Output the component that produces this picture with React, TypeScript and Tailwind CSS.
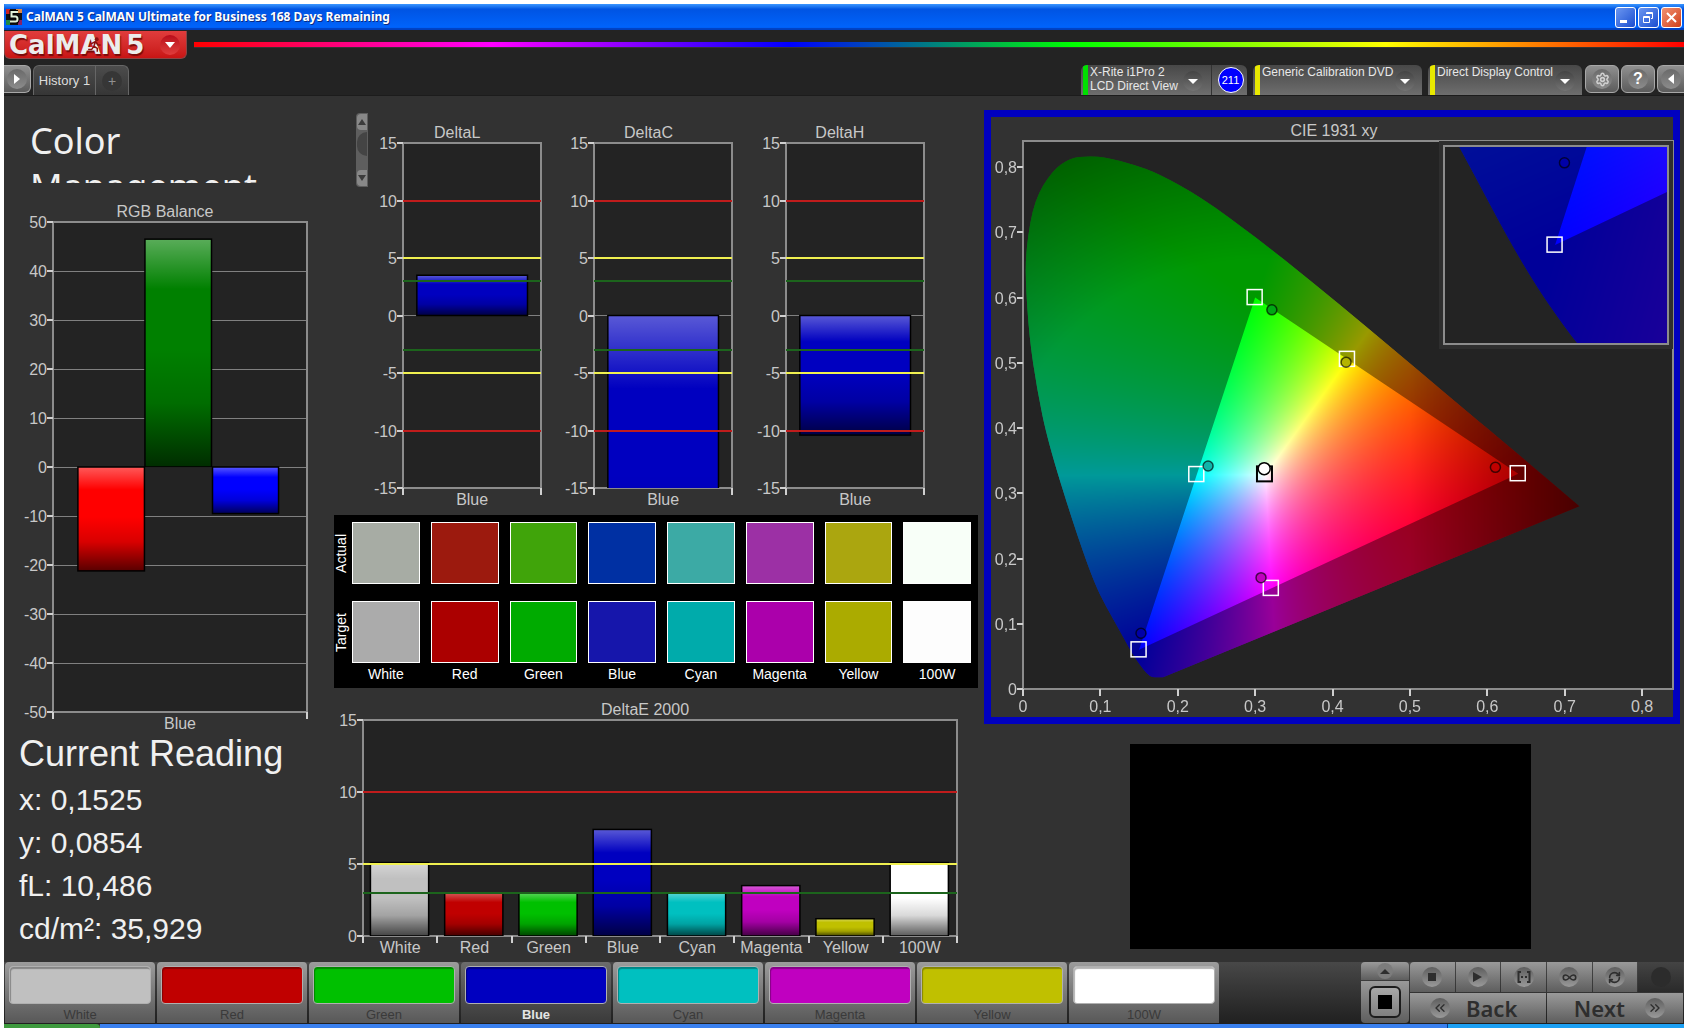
import React, { useEffect, useId, useRef } from 'react';
import {
  ChevronsLeft,
  ChevronsRight,
  Infinity as InfinityIcon,
  RefreshCw,
  Settings,
} from 'lucide-react';
import clsx from 'clsx';

interface Bar {
  x: number; // left edge, 0..1 of the plot width
  w: number;
  value: number;
  color: string;
}

interface Limit {
  value: number;
  color: string;
}

interface BarChartProps {
  title: string;
  min: number;
  max: number;
  step: number;
  bars: Bar[];
  categories: string[];
  limits?: Limit[];
  gridAt?: number[];
}

const patches = [
  { name: 'White', color: '#c0c0c0', actual: '#a7aca4', target: '#ababab', deltaE: 5.1 },
  { name: 'Red', color: '#c00000', actual: '#9c1a0e', target: '#ab0000', deltaE: 3 },
  { name: 'Green', color: '#00c000', actual: '#40a40a', target: '#00ab00', deltaE: 3 },
  { name: 'Blue', color: '#0000c0', actual: '#0030a3', target: '#1616ab', deltaE: 7.4 },
  { name: 'Cyan', color: '#00c0c0', actual: '#3caaa5', target: '#00abab', deltaE: 3 },
  { name: 'Magenta', color: '#c000c0', actual: '#9c30a5', target: '#ab00ab', deltaE: 3.5 },
  { name: 'Yellow', color: '#c0c000', actual: '#aba60f', target: '#abab00', deltaE: 1.2 },
  { name: '100W', color: '#ffffff', actual: '#f8fff8', target: '#fdfdfd', deltaE: 5.1 },
];

const deltaLimits: Limit[] = [
  { value: 10, color: '#c01c1c' },
  { value: 5, color: '#f0f050' },
  { value: 3, color: '#1c641c' },
  { value: -3, color: '#1c641c' },
  { value: -5, color: '#f0f050' },
  { value: -10, color: '#c01c1c' },
];

const deltas = [
  { title: 'DeltaL', value: 3.5 },
  { title: 'DeltaC', value: -29 },
  { title: 'DeltaH', value: -10.4 },
];

const readings = ['x: 0,1525', 'y: 0,0854', 'fL: 10,486', 'cd/m²: 35,929'];

const BarChart: React.FC<BarChartProps> = ({ title, min, max, step, bars, categories, limits = [], gridAt = [] }) => {
  const id = useId().replace(/[^a-zA-Z0-9]/g, '');
  const pct = (v: number) => ((max - v) / (max - min)) * 100;
  const ticks: number[] = [];
  for (let v = max; v >= min; v -= step) ticks.push(v);

  return (
    <div className="flex min-h-0 flex-1 flex-col">
      <h3 className="h-5 text-center text-base leading-5 text-[#c8c8c8]">{title}</h3>
      <div className="mr-[5px] mb-5 ml-[35px] min-h-0 flex-1">
        <svg width="100%" height="100%" className="block overflow-visible bg-[#232323]" role="img" aria-label={title}>
          <defs>
            <linearGradient id={`shade${id}`} x1="0" y1="0" x2="0" y2="1">
              <stop offset="0" stopColor="#fff" stopOpacity="0.35" />
              <stop offset="0.22" stopColor="#fff" stopOpacity="0" />
              <stop offset="0.48" stopColor="#000" stopOpacity="0" />
              <stop offset="0.72" stopColor="#000" stopOpacity="0.15" />
              <stop offset="1" stopColor="#000" stopOpacity="0.65" />
            </linearGradient>
          </defs>
          {gridAt.map((v) => (
            <line key={v} x1="0" x2="100%" y1={`${pct(v)}%`} y2={`${pct(v)}%`} stroke="#808080" shapeRendering="crispEdges" />
          ))}
          <rect width="100%" height="100%" fill="none" stroke="#8c8c8c" strokeWidth="2" shapeRendering="crispEdges" />
          {/* the inner svg cuts off bars that run past the scale */}
          <svg width="100%" height="100%">
            {bars.map((b, i) => {
              const box = {
                x: `${b.x * 100}%`,
                y: `${pct(Math.max(b.value, 0))}%`,
                width: `${b.w * 100}%`,
                height: `${(Math.abs(b.value) / (max - min)) * 100}%`,
              };
              return (
                <g key={i}>
                  <rect {...box} fill={b.color} />
                  <rect {...box} fill={`url(#shade${id})`} stroke="#000" strokeWidth="1.5" />
                </g>
              );
            })}
          </svg>
          {limits.map((l) => (
            <line
              key={l.value}
              x1="0"
              x2="100%"
              y1={`${pct(l.value)}%`}
              y2={`${pct(l.value)}%`}
              stroke={l.color}
              strokeWidth="2"
              shapeRendering="crispEdges"
            />
          ))}
          {ticks.map((v) => (
            <g key={v}>
              <line x1="-6" x2="0" y1={`${pct(v)}%`} y2={`${pct(v)}%`} stroke="#d0d0d0" strokeWidth="2" shapeRendering="crispEdges" />
              <text x="-6" y={`${pct(v)}%`} dy="6" textAnchor="end" fontSize="16" fill="#c8c8c8">
                {v}
              </text>
            </g>
          ))}
          {[...categories, ''].map((_, i) => (
            <svg key={i} x={`${(i / categories.length) * 100}%`} y="100%" overflow="visible">
              <line y2="7" stroke="#d0d0d0" strokeWidth="2" shapeRendering="crispEdges" />
            </svg>
          ))}
          {categories.map((c, i) => (
            <text key={c} x={`${((i + 0.5) / categories.length) * 100}%`} y="100%" dy="17" textAnchor="middle" fontSize="16" fill="#c8c8c8">
              {c}
            </text>
          ))}
        </svg>
      </div>
    </div>
  );
};

/* ---------- CIE 1931 diagram ---------- */

type Pt = [number, number];

interface Range {
  x0: number;
  x1: number;
  y0: number;
  y1: number;
}

const fullRange: Range = { x0: 0, x1: 0.84, y0: 0, y1: 0.84 };
const zoomRange: Range = { x0: 0.1207, x1: 0.1798, y0: 0.0297, y1: 0.0903 };

const locus: Pt[] = [
  [0.719, 0.28], [0.6915, 0.3083], [0.627, 0.3725], [0.5752, 0.4242], [0.5125, 0.4866],
  [0.4441, 0.5547], [0.3731, 0.6245], [0.3016, 0.6923], [0.2296, 0.7543], [0.175, 0.79],
  [0.143, 0.804], [0.108, 0.815], [0.085, 0.817], [0.061, 0.814], [0.038, 0.795],
  [0.0146, 0.749], [0.0045, 0.68], [0.003, 0.63], [0.0082, 0.5384], [0.018, 0.46],
  [0.032, 0.38], [0.064, 0.257], [0.091, 0.165], [0.108, 0.125], [0.1246, 0.0903],
  [0.1417, 0.0528], [0.1555, 0.0297], [0.164, 0.019], [0.17, 0.018], [0.181, 0.018],
];

const gamut: Pt[] = [[0.64, 0.33], [0.3, 0.6], [0.15, 0.06]];

const markers = [
  { target: [0.3, 0.6], actual: [0.3216, 0.5812], fill: '#00a814' },
  { target: [0.4193, 0.5053], actual: [0.4175, 0.501], fill: '#b4b400' },
  { target: [0.64, 0.33], actual: [0.6105, 0.3398], fill: '#c00000' },
  { target: [0.2246, 0.3287], actual: [0.2392, 0.3419], fill: '#10b4aa' },
  { target: [0.3209, 0.1542], actual: [0.3076, 0.1707], fill: '#c000c0' },
  { target: [0.15, 0.06], actual: [0.1525, 0.0854], fill: '#0000a8' },
  { target: [0.3127, 0.329], actual: [0.3117, 0.3378], fill: '#ffffff' },
];

const chromaColor = (x: number, y: number): number[] => {
  const yy = Math.max(y, 0.002);
  const X = x / yy;
  const Z = (1 - x - yy) / yy;
  const rgb = [
    3.2406 * X - 1.5372 - 0.4986 * Z,
    -0.9689 * X + 1.8758 + 0.0415 * Z,
    0.0557 * X - 0.204 + 1.057 * Z,
  ].map((c) => Math.max(c, 0));
  const top = Math.max(...rgb);
  // falls off towards the red and the green end
  let level = Math.min(1, 1 - (x - 0.5) * 2.4);
  if (y > 0.4) {
    level = Math.min(level, 1 - (Math.hypot(x - 0.31, y - 0.33) - 0.33) * 1.7);
  }
  return rgb.map((c) => (255 * level * c) / top);
};

const GamutCanvas: React.FC<{ range: Range }> = ({ range }) => {
  const ref = useRef<HTMLCanvasElement>(null);

  useEffect(() => {
    const canvas = ref.current;
    if (!canvas) return;

    const paint = () => {
      const w = canvas.clientWidth;
      const h = canvas.clientHeight;
      if (!w || !h) return;
      canvas.width = w;
      canvas.height = h;
      const ctx = canvas.getContext('2d')!;
      const px = ([x, y]: Pt): Pt => [
        ((x - range.x0) / (range.x1 - range.x0)) * w,
        ((range.y1 - y) / (range.y1 - range.y0)) * h,
      ];

      const layer = document.createElement('canvas');
      layer.width = w;
      layer.height = h;
      const lctx = layer.getContext('2d')!;
      const img = lctx.createImageData(w, h);
      for (let j = 0; j < h; j++) {
        const y = range.y1 - (j / h) * (range.y1 - range.y0);
        for (let i = 0; i < w; i++) {
          const x = range.x0 + (i / w) * (range.x1 - range.x0);
          const [r, g, b] = chromaColor(x, y);
          img.data.set([r, g, b, 255], (j * w + i) * 4);
        }
      }
      lctx.putImageData(img, 0, 0);

      // smooth outline through the middle of each pair of points
      const pts = locus.map(px);
      ctx.beginPath();
      ctx.moveTo(pts[0][0], pts[0][1]);
      for (let i = 1; i < pts.length - 1; i++) {
        const [ax, ay] = pts[i];
        const [bx, by] = pts[i + 1];
        ctx.quadraticCurveTo(ax, ay, (ax + bx) / 2, (ay + by) / 2);
      }
      const last = pts[pts.length - 1];
      ctx.lineTo(last[0], last[1]);
      ctx.closePath();
      ctx.clip();
      ctx.drawImage(layer, 0, 0);

      // darken everything outside the Rec.709 triangle
      ctx.beginPath();
      ctx.rect(0, 0, w, h);
      gamut.map(px).forEach(([x, y], i) => (i ? ctx.lineTo(x, y) : ctx.moveTo(x, y)));
      ctx.closePath();
      ctx.fillStyle = 'rgba(0,0,0,0.4)';
      ctx.fill('evenodd');
    };

    paint();
    window.addEventListener('resize', paint);
    return () => window.removeEventListener('resize', paint);
  }, [range]);

  return <canvas ref={ref} className="absolute inset-0 h-full w-full" />;
};

const Markers: React.FC<{ range: Range; items: typeof markers }> = ({ range, items }) => {
  const cx = (x: number) => `${((x - range.x0) / (range.x1 - range.x0)) * 100}%`;
  const cy = (y: number) => `${((range.y1 - y) / (range.y1 - range.y0)) * 100}%`;
  return (
    <>
      {items.map((m) => {
        const isWhite = m.fill === '#ffffff';
        return (
          <g key={m.fill}>
            <svg x={cx(m.target[0])} y={cy(m.target[1])} overflow="visible">
              <rect x="-8" y="-8" width="15" height="15" fill="none" stroke={isWhite ? '#000' : '#fff'} strokeWidth={isWhite ? 2 : 1.5} />
            </svg>
            <circle cx={cx(m.actual[0])} cy={cy(m.actual[1])} r={isWhite ? 6 : 5} fill={m.fill} stroke="#000" strokeOpacity={isWhite ? 1 : 0.65} strokeWidth="1.5" />
          </g>
        );
      })}
    </>
  );
};

const CieChart: React.FC = () => {
  const ticks = [0, 1, 2, 3, 4, 5, 6, 7, 8];
  const label = (t: number) => (t === 0 ? '0' : `0,${t}`);
  return (
    <section className="flex min-h-0 flex-[600] flex-col border-[7px] border-[#0000c0]">
      <h3 className="mt-1 h-5 pl-1 text-center text-base leading-5 text-[#c8c8c8]">CIE 1931 xy</h3>
      <div className="relative mb-7 ml-8 min-h-0 flex-1 bg-[#232323]">
        <GamutCanvas range={fullRange} />
        <svg width="100%" height="100%" className="absolute inset-0 block overflow-visible" role="img" aria-label="CIE 1931 xy">
          <rect width="100%" height="100%" fill="none" stroke="#8c8c8c" strokeWidth="2" shapeRendering="crispEdges" />
          {ticks.map((t) => {
            const y = `${100 - (t / 8.4) * 100}%`;
            const x = `${(t / 8.4) * 100}%`;
            return (
              <g key={t} fontSize="16" fill="#c8c8c8" stroke="none">
                <line x1="-6" x2="0" y1={y} y2={y} stroke="#d0d0d0" strokeWidth="2" shapeRendering="crispEdges" />
                <text x="-6" y={y} dy="6" textAnchor="end">
                  {label(t)}
                </text>
                <svg x={x} y="100%" overflow="visible">
                  <line y2="7" stroke="#d0d0d0" strokeWidth="2" shapeRendering="crispEdges" />
                </svg>
                <text x={x} y="100%" dy="23" textAnchor="middle">
                  {label(t)}
                </text>
              </g>
            );
          })}
          <Markers range={fullRange} items={markers} />
        </svg>
        {/* magnified view around the current patch */}
        <div className="absolute top-0 right-0 h-[38%] w-[36%] bg-[#2e2e2e] p-1">
          <div className="relative h-full w-full overflow-hidden border-2 border-[#8c8c8c] bg-[#232323]">
            <GamutCanvas range={zoomRange} />
            <svg width="100%" height="100%" className="absolute inset-0 block">
              <Markers range={zoomRange} items={markers.filter((m) => m.fill === '#0000a8')} />
            </svg>
          </div>
        </div>
      </div>
    </section>
  );
};

/* ---------- window chrome ---------- */

const Caret: React.FC<{ className?: string }> = ({ className }) => (
  <span className={clsx('flex h-5 w-5 shrink-0 items-center justify-center rounded-full bg-linear-to-b from-[#444] to-[#747474]', className)}>
    <svg width="10" height="5" viewBox="0 0 10 5">
      <path d="M0 0h10L5 5z" fill="#fff" />
    </svg>
  </span>
);

const TitleBar: React.FC = () => (
  <header className="flex h-[26px] items-center gap-1 bg-linear-to-b from-[#3a96ff] via-[#0054e3] via-20% to-[#0066ff] px-0.5 shadow-[inset_0_-2px_1px_#0040c0]">
    <svg width="16" height="16" viewBox="0 0 16 16">
      <rect width="16" height="16" fill="#111" />
      <path d="M0 0h4v5H0z" fill="#c22" />
      <path d="M10 0h6v4h-6z" fill="#d84" />
      <path d="M0 11h4v5H0z" fill="#284" />
      <path d="M12 11h4v5h-4z" fill="#826" />
      <path d="M12 3H5.500v4.500h4q2 0 2 2.500t-2 2.500H4" fill="none" stroke="#000" strokeWidth="4" />
      <path d="M12 3H5.500v4.500h4q2 0 2 2.500t-2 2.500H4" fill="none" stroke="#dff0d8" strokeWidth="2" />
    </svg>
    <h1 className="flex-1 font-['Noto_Sans'] text-xs leading-4 font-bold text-white [text-shadow:1px_1px_0_#0a2a80]">
      CalMAN 5 CalMAN Ultimate for Business 168 Days Remaining
    </h1>
    <div className="flex gap-0.5">
      <button aria-label="Minimize" className="h-[21px] w-[21px] rounded-[3px] border border-white bg-linear-to-br from-[#6c96f0] to-[#1a4cd0]">
        <svg width="19" height="19" viewBox="0 0 19 19">
          <path d="M4 12h7v3H4z" fill="#fff" />
        </svg>
      </button>
      <button aria-label="Restore" className="h-[21px] w-[21px] rounded-[3px] border border-white bg-linear-to-br from-[#6c96f0] to-[#1a4cd0]">
        <svg width="19" height="19" viewBox="0 0 19 19" fill="none" stroke="#fff">
          <path d="M4.500 8.500h6v6h-6zM4 9.500h7M7.500 6V4.500h6v6H12M7 5.500h7" />
        </svg>
      </button>
      <button aria-label="Close" className="h-[21px] w-[21px] rounded-[3px] border border-white bg-linear-to-br from-[#f09070] to-[#d03c10]">
        <svg width="19" height="19" viewBox="0 0 19 19">
          <path d="M5 5l9 9M14 5l-9 9" stroke="#fff" strokeWidth="2" />
        </svg>
      </button>
    </div>
  </header>
);

const DeviceMenu: React.FC<{ lines: string[]; bar: string; width: string; badge?: string }> = ({ lines, bar, width, badge }) => (
  <div className={clsx('flex h-[30px] overflow-hidden rounded-t-md bg-linear-to-b from-[#484848] to-[#6e6e6e]', width)}>
    <button aria-haspopup="menu" className="flex min-w-0 flex-1 items-start gap-0.5 pl-0.5 text-left">
      <span className={clsx('h-full w-[5px] shrink-0', bar)} />
      <span className="flex-1 text-xs leading-[14px] whitespace-nowrap text-[#e8e8e8]">
        {lines.map((l) => (
          <span key={l} className="block">
            {l}
          </span>
        ))}
      </span>
      <Caret className="mt-1.5 mr-2" />
    </button>
    {badge && (
      <span className="flex w-9 items-center justify-center border-l border-[#333] pl-0.5">
        <span className="flex h-[26px] w-[26px] items-center justify-center rounded-full border border-white bg-[#0000ff] text-[11px] text-white">
          {badge}
        </span>
      </span>
    )}
  </div>
);

const squareButton =
  'flex h-7 items-center justify-center border border-[#a8a8a8] bg-linear-to-b from-[#909090] to-[#5c5c5c]';
const knob =
  'flex h-5 w-5 items-center justify-center rounded-full bg-linear-to-b from-[#6a6a6a] to-[#8c8c8c]';

const Header: React.FC = () => (
  <div className="bg-[#232323]">
    <div className="flex h-[35px] items-start gap-[7px]">
      <button
        aria-label="CalMAN 5 menu"
        className="mt-px flex h-7 w-[183px] items-center justify-between overflow-hidden rounded-b-md border border-t-0 border-[#8a4444] bg-linear-to-b from-[#e03c3c] to-[#c81414] pr-1.5 pl-1"
      >
        <span className="relative flex gap-1 font-['DejaVu_Sans'] text-[26px] leading-7 font-bold text-[#ececec] [text-shadow:1px_2px_1px_#7a0a0a]">
          <span>CalMAN</span>
          <span>5</span>
          <svg className="absolute top-1.5 left-[78px]" width="16" height="16" viewBox="0 0 14 14">
            <circle cx="8.500" cy="2" r="1.700" fill="#8a1010" />
            <path d="M3.500 6l4-2 2 3h2.500M7.500 4L6 8l3 2v3M6 8l-2 3H1" fill="none" stroke="#8a1010" strokeWidth="1.300" />
          </svg>
        </span>
        <span className="flex h-5 w-5 items-center justify-center rounded-full bg-linear-to-b from-[#b80a1a] to-[#e03c3c]">
          <svg width="10" height="6" viewBox="0 0 10 6">
            <path d="M0 0h10L5 6z" fill="#fff" />
          </svg>
        </span>
      </button>
      <div className="mt-3 h-1.5 flex-1 border-b border-[#333] bg-[linear-gradient(90deg,#f00_0%,#f0f_20%,#00f_40%,#0f0_59%,#ff0_80%,#f00_100%)]" />
    </div>

    <div className="flex h-[31px] items-start justify-between border-b border-[#1c1c1c]">
      <nav className="flex items-start gap-0.5">
        <button aria-label="Expand" className={clsx(squareButton, 'w-[27px] rounded-r-md border-l-0')}>
          <span className={knob}>
            <svg width="6" height="10" viewBox="0 0 6 10">
              <path d="M0 0v10l6-5z" fill="#fff" />
            </svg>
          </span>
        </button>
        <div className="flex h-[30px] rounded-t-md border border-b-0 border-[#666] bg-linear-to-b from-[#4c4c4c] to-[#363636]">
          <button className="w-[62px] border-r border-[#666] text-center text-[13px] text-[#dcdcdc]">History 1</button>
          <button aria-label="Add history" className="flex w-8 items-center justify-center">
            <span className="flex h-5 w-5 items-center justify-center rounded-full bg-[#363636] text-sm text-[#909090]">+</span>
          </button>
        </div>
      </nav>

      <div className="flex items-start">
        <DeviceMenu lines={['X-Rite i1Pro 2', 'LCD Direct View']} bar="bg-[#00e000]" width="w-[166px]" badge="211" />
        <div className="w-1.5" />
        <DeviceMenu lines={['Generic Calibration DVD']} bar="bg-[#e8e800]" width="w-[169px]" />
        <div className="w-1.5" />
        <DeviceMenu lines={['Direct Display Control']} bar="bg-[#e8e800]" width="w-[154px]" />
        <div className="ml-[3px] flex gap-0.5">
          <button aria-label="Settings" className={clsx(squareButton, 'w-[34px] rounded-md')}>
            <span className={knob}>
              <Settings size={15} color="#d0d0d0" strokeWidth={2.5} />
            </span>
          </button>
          <button aria-label="Help" className={clsx(squareButton, 'w-[34px] rounded-md')}>
            <span className={clsx(knob, 'text-base font-bold text-white')}>?</span>
          </button>
          <button aria-label="Collapse" className={clsx(squareButton, 'w-[27px] rounded-l-md border-r-0')}>
            <span className={knob}>
              <svg width="6" height="10" viewBox="0 0 6 10">
                <path d="M6 0v10L0 5z" fill="#fff" />
              </svg>
            </span>
          </button>
        </div>
      </div>
    </div>
  </div>
);

const TextScroll: React.FC = () => (
  <div className="-mt-2.5 flex h-[74px] w-3 flex-col items-center justify-between rounded-l bg-[#5e5e5e] p-px">
    <button aria-label="Scroll up" className="flex h-4 w-full items-center justify-center rounded-l-sm bg-[#888]">
      <svg width="8" height="6" viewBox="0 0 8 6">
        <path d="M0 6h8L4 0z" fill="#3c3c3c" />
      </svg>
    </button>
    <span className="mb-3 h-6 w-2.5 rounded-l-full bg-[#444]" />
    <button aria-label="Scroll down" className="flex h-4 w-full items-center justify-center rounded-l-sm bg-[#888]">
      <svg width="8" height="6" viewBox="0 0 8 6">
        <path d="M0 0h8L4 6z" fill="#3c3c3c" />
      </svg>
    </button>
  </div>
);

const SwatchTable: React.FC = () => (
  <div className="mr-1.5 flex h-[173px] bg-black pt-[7px] pr-[7px] text-sm text-white">
    <div className="flex w-[18px] flex-col gap-[17px] pr-1">
      {['Actual', 'Target'].map((t) => (
        <span key={t} className="flex h-[62px] items-center justify-center leading-4 [writing-mode:sideways-lr]">
          {t}
        </span>
      ))}
    </div>
    <div className="grid flex-1 grid-cols-8 gap-[11px]">
      {patches.map((p) => (
        <div key={p.name} className="flex flex-col items-center">
          <div className="mb-[17px] h-[62px] w-full border border-white" style={{ backgroundColor: p.actual }} />
          <div className="h-[62px] w-full border border-white" style={{ backgroundColor: p.target }} />
          <span className="mt-0.5 leading-[18px]">{p.name}</span>
        </div>
      ))}
    </div>
  </div>
);

const Footer: React.FC = () => {
  const key = 'flex items-center justify-center bg-linear-to-b from-[#9a9a9a] to-[#5e5e5e]';
  const wide = 'flex items-center bg-linear-to-b from-[#9a9a9a] to-[#5e5e5e]';
  const dot = 'flex h-5 w-5 items-center justify-center rounded-full bg-linear-to-b from-[#5e5e5e] to-[#9a9a9a] text-[#2e2e2e]';
  return (
    <footer className="flex h-[62px] items-stretch justify-between bg-linear-to-b from-[#484848] to-[#202020] pb-px">
      <div className="flex gap-0.5 pl-px">
        {patches.map((p) => {
          const on = p.name === 'Blue';
          return (
            <button
              key={p.name}
              className={clsx(
                'flex w-[150px] flex-col items-center rounded-t px-1 pt-1 text-[13px] leading-4',
                on
                  ? 'bg-linear-to-b from-[#6c6c6c] to-[#3a3a3a] font-bold text-[#e4e4e4]'
                  : 'bg-linear-to-b from-[#9c9c9c] to-[#585858] text-[#3a3a3a]',
              )}
            >
              <span
                className="mb-[3px] h-[38px] w-full rounded border border-[#b0b0b0] shadow-[inset_1px_2px_1px_rgba(0,0,0,0.3)]"
                style={{ backgroundColor: p.color }}
              />
              {p.name}
            </button>
          );
        })}
      </div>

      <div className="flex gap-px pr-px">
        <div className="flex w-12 flex-col gap-px">
          <button aria-label="Show pattern list" className={clsx(key, 'h-[18px] rounded-t')}>
            <span className="flex h-4 w-4 items-center justify-center rounded-full bg-[#7c7c7c]">
              <svg width="10" height="5" viewBox="0 0 10 5">
                <path d="M0 5h10L5 0z" fill="#2e2e2e" />
              </svg>
            </span>
          </button>
          <button aria-label="Pattern window" className={clsx(key, 'flex-1 rounded-b')}>
            <span className="flex h-8 w-8 items-center justify-center rounded-md border-2 border-[#1c1c1c] bg-linear-to-b from-[#a8a8a8] to-[#808080]">
              <span className="h-3.5 w-3.5 bg-black" />
            </span>
          </button>
        </div>
        <div className="flex w-[273px] flex-col gap-px">
          <div className="grid flex-1 grid-cols-6 gap-px">
            <button aria-label="Stop" className={clsx(key, 'rounded-tl')}>
              <span className={dot}>
                <span className="h-2 w-2 bg-[#2e2e2e]" />
              </span>
            </button>
            <button aria-label="Read" className={key}>
              <span className={dot}>
                <svg width="9" height="10" viewBox="0 0 9 10">
                  <path d="M0 0v10l9-5z" fill="currentColor" />
                </svg>
              </span>
            </button>
            <button aria-label="Read series" className={key}>
              <span className={dot}>
                <svg width="14" height="12" viewBox="0 0 14 12" fill="none" stroke="currentColor" strokeWidth="2">
                  <path d="M4 1H1.500v10H4M10 1h2.500v10H10M4 6h2M8 6h2" />
                </svg>
              </span>
            </button>
            <button aria-label="Read continuous" className={key}>
              <span className={dot}>
                <InfinityIcon size={15} strokeWidth={2.5} />
              </span>
            </button>
            <button aria-label="Refresh" className={key}>
              <span className={dot}>
                <RefreshCw size={13} strokeWidth={3} />
              </span>
            </button>
            <span className="flex items-center justify-center bg-linear-to-b from-[#444] to-[#2a2a2a]">
              <span className="h-5 w-5 rounded-full bg-[#2c2c2c]" />
            </span>
          </div>
          <div className="grid flex-1 grid-cols-2 gap-px font-['Noto_Sans'] text-[22px] leading-7 font-semibold text-[#2e2e2e]">
            <button className={clsx(wide, 'gap-4 pl-5')}>
              <span className={dot}>
                <ChevronsLeft size={16} />
              </span>
              Back
            </button>
            <button className={clsx(wide, 'justify-end gap-5 pr-[18px]')}>
              Next
              <span className={dot}>
                <ChevronsRight size={16} />
              </span>
            </button>
          </div>
        </div>
      </div>
    </footer>
  );
};

const App: React.FC = () => {
  return (
    <div className="flex h-screen min-h-[900px] min-w-[1400px] flex-col border-x-4 border-t-4 border-white bg-[#323232] font-['Liberation_Sans',Arial,sans-serif]">
      <TitleBar />
      <Header />

      <main className="grid min-h-0 flex-1 grid-cols-[330fr_650fr_700fr]">
        {/* Left: RGB balance and the current reading */}
        <section className="flex min-h-0 flex-col pt-3.5">
          <h2 className="ml-[26px] h-[73px] overflow-hidden pt-2 font-['Noto_Sans'] text-[36px] leading-[46px] text-[#f0f0f0]">
            Color
            <br />
            Management
          </h2>
          <div className="mt-[19px] mr-[22px] ml-3.5 flex min-h-0 flex-1">
            <BarChart
              title="RGB Balance"
              min={-50}
              max={50}
              step={10}
              gridAt={[40, 30, 20, 10, 0, -10, -20, -30, -40]}
              categories={['Blue']}
              bars={[
                { x: 0.098, w: 0.262, value: -21.2, color: '#ff0000' },
                { x: 0.362, w: 0.262, value: 46.5, color: '#008000' },
                { x: 0.628, w: 0.26, value: -9.5, color: '#0000ff' },
              ]}
            />
          </div>
          <div className="pb-3 pl-[15px] text-[#f0f0f0]">
            <h2 className="mb-0.5 text-[36px] leading-[44px]">Current Reading</h2>
            {readings.map((r) => (
              <p key={r} className="text-[30px] leading-[43px]">
                {r}
              </p>
            ))}
          </div>
        </section>

        {/* Middle: deltas, patch comparison, DeltaE */}
        <section className="flex min-h-0 flex-col pt-[27px]">
          <div className="flex min-h-0 flex-[385] pr-[55px] pl-[22px]">
            <TextScroll />
            <div className="grid min-h-0 flex-1 grid-cols-3 gap-[13px]">
              {deltas.map((d) => (
                <div key={d.title} className="flex min-h-0">
                  <BarChart
                    title={d.title}
                    min={-15}
                    max={15}
                    step={5}
                    gridAt={[0]}
                    limits={deltaLimits}
                    categories={['Blue']}
                    bars={[{ x: 0.1, w: 0.8, value: d.value, color: '#0000c0' }]}
                  />
                </div>
              ))}
            </div>
          </div>
          <div className="h-[7px]" />
          <SwatchTable />
          <div className="h-3" />
          <div className="mr-[22px] mb-1.5 -ml-1.5 flex min-h-0 flex-[256]">
            <BarChart
              title="DeltaE 2000"
              min={0}
              max={15}
              step={5}
              limits={deltaLimits.filter((l) => l.value > 0)}
              categories={patches.map((p) => p.name)}
              bars={patches.map((p, i) => ({ x: (i + 0.1) / 8, w: 0.098, value: p.deltaE, color: p.color }))}
            />
          </div>
        </section>

        {/* Right: chromaticity and pattern preview */}
        <section className="flex min-h-0 flex-col gap-5 pt-3.5 pr-1 pb-[13px]">
          <CieChart />
          <div className="mr-[149px] ml-[146px] min-h-0 flex-[205] bg-black" />
        </section>
      </main>

      <Footer />
      <div className="flex h-1">
        <div className="w-24 rounded-tr bg-[#3e9a3e]" />
        <div className="flex-1 bg-[#3a80ee]" />
        <div className="w-[237px] border-l border-[#0a4090] bg-[#1ca0f4]" />
      </div>
    </div>
  );
};

export default App;
